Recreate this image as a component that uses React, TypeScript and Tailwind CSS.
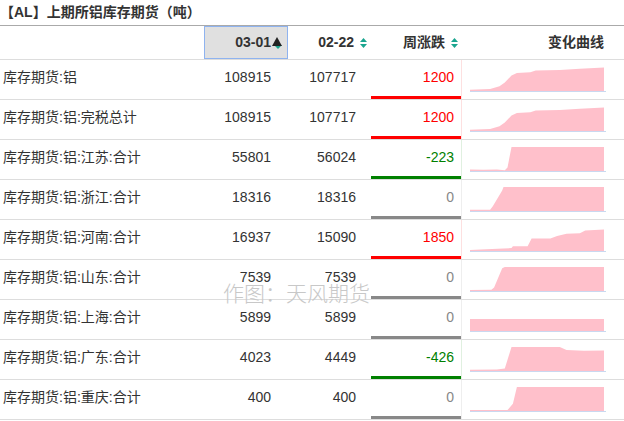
import React from "react"

type Row = {
  name: string
  a: string
  b: string
  chg: number
  pts: [number, number][]
}

const rows: Row[] = [
  {
    name: "库存期货:铝",
    a: "108915",
    b: "107717",
    chg: 1200,
    pts: [[0, 0.05], [0.15, 0.08], [0.22, 0.2], [0.26, 0.35], [0.31, 0.65], [0.35, 0.75], [0.45, 0.78], [0.49, 0.85], [0.67, 0.88], [0.82, 0.93], [1, 0.98]],
  },
  {
    name: "库存期货:铝:完税总计",
    a: "108915",
    b: "107717",
    chg: 1200,
    pts: [[0, 0.05], [0.15, 0.08], [0.22, 0.2], [0.26, 0.35], [0.31, 0.65], [0.35, 0.75], [0.45, 0.78], [0.49, 0.85], [0.67, 0.88], [0.82, 0.93], [1, 0.98]],
  },
  {
    name: "库存期货:铝:江苏:合计",
    a: "55801",
    b: "56024",
    chg: -223,
    pts: [[0, 0.06], [0.1, 0.05], [0.2, 0.06], [0.26, 0.03], [0.28, 0.15], [0.31, 1], [1, 1]],
  },
  {
    name: "库存期货:铝:浙江:合计",
    a: "18316",
    b: "18316",
    chg: 0,
    pts: [[0, 0.05], [0.15, 0.05], [0.17, 0.2], [0.24, 0.85], [0.25, 1], [1, 1]],
  },
  {
    name: "库存期货:铝:河南:合计",
    a: "16937",
    b: "15090",
    chg: 1850,
    pts: [[0, 0.04], [0.08, 0.06], [0.25, 0.1], [0.31, 0.12], [0.32, 0.2], [0.43, 0.2], [0.46, 0.52], [0.6, 0.52], [0.65, 0.62], [0.72, 0.72], [0.82, 0.74], [0.86, 0.86], [1, 0.9]],
  },
  {
    name: "库存期货:铝:山东:合计",
    a: "7539",
    b: "7539",
    chg: 0,
    pts: [[0, 0.04], [0.16, 0.05], [0.18, 0.15], [0.24, 0.95], [0.26, 1], [1, 1]],
  },
  {
    name: "库存期货:铝:上海:合计",
    a: "5899",
    b: "5899",
    chg: 0,
    pts: [[0, 0.5], [1, 0.5]],
  },
  {
    name: "库存期货:铝:广东:合计",
    a: "4023",
    b: "4449",
    chg: -426,
    pts: [[0, 0.05], [0.2, 0.06], [0.26, 0.1], [0.31, 1], [0.67, 1], [0.72, 0.87], [0.85, 0.84], [1, 0.85]],
  },
  {
    name: "库存期货:铝:重庆:合计",
    a: "400",
    b: "400",
    chg: 0,
    pts: [[0, 0.04], [0.28, 0.04], [0.32, 0.3], [0.35, 1], [1, 1]],
  },
]

function SortIcon() {
  return (
    <svg width="9" height="12" viewBox="0 0 9 12" className="shrink-0">
      <path d="M4.5 1 L8 5 L1 5 Z" fill="#1aa58f" />
      <path d="M4.5 11 L8 7 L1 7 Z" fill="#1aa58f" />
    </svg>
  )
}

function ActiveSortIcon() {
  return (
    <svg width="11" height="14" viewBox="0 0 11 14" className="shrink-0">
      <path d="M6 13 L10 9 L2 9 Z" fill="#1aa58f" />
      <path d="M5 1 L10 10 L0 10 Z" fill="#222" />
    </svg>
  )
}

function Spark({ pts }: { pts: [number, number][] }) {
  const w = 136
  const h = 26
  const top = 1
  const line = pts
    .map(([x, y]) => `${(x * (w - 2)).toFixed(1)},${(h - 1 - y * (h - 1 - top)).toFixed(1)}`)
    .join(" L")
  const d = `M0,${h - 1} L${line} L${w - 2},${h - 1} Z`
  return (
    <svg width={w} height={h + 1} viewBox={`0 0 ${w} ${h + 1}`}>
      <path d={d} fill="#ffc0cb" />
      <line x1="0" y1={h - 0.5} x2={w} y2={h - 0.5} stroke="#c9d8f0" strokeWidth="1" />
    </svg>
  )
}

export default function App() {
  const font = { fontFamily: '"Liberation Sans", Arial, "Noto Sans CJK SC", sans-serif' }
  return (
    <div className="relative w-[624px] h-[421px] bg-white text-[14px] text-[#333] overflow-hidden" style={font}>
      {/* 标题 */}
      <div className="h-[25px] pl-[0px] flex items-center font-bold text-[14px] text-[#333]">
        【AL】上期所铝库存期货（吨）
      </div>
      <div className="h-px bg-[#aaa]" />

      {/* 表头 */}
      <div className="grid grid-cols-[204px_84px_83px_91px_162px] h-[34px] border-b border-[#ddd] font-bold">
        <div />
        <div className="flex items-center justify-end gap-[1px] pr-[4px] bg-[#e0e0e0] border border-[#8fb3ef]">
          <span>03-01</span>
          <ActiveSortIcon />
        </div>
        <div className="flex items-center justify-end gap-[5px] pr-[3px]">
          <span>02-22</span>
          <SortIcon />
        </div>
        <div className="flex items-center justify-end gap-[5px] pr-[3px]">
          <span>周涨跌</span>
          <SortIcon />
        </div>
        <div className="flex items-center justify-end pr-[20px]">变化曲线</div>
      </div>

      {/* 数据行 */}
      {rows.map((r) => {
        const color = r.chg > 0 ? "text-[#ff0000]" : r.chg < 0 ? "text-[#008000]" : "text-[#888]"
        const bar = r.chg > 0 ? "bg-[#ff0000]" : r.chg < 0 ? "bg-[#008000]" : "bg-[#888]"
        const sep = r.chg > 0 ? "border-[#fde0e0]" : r.chg < 0 ? "border-[#e0f0e0]" : "border-[#eee]"
        return (
          <div key={r.name} className="grid grid-cols-[204px_84px_83px_91px_162px] h-[40px] border-b border-[#ddd]">
            <div className="flex items-center pl-[3px] pb-[4px]">{r.name}</div>
            <div className="flex items-center justify-end pr-[17px] pb-[4px]">{r.a}</div>
            <div className="flex items-center justify-end pr-[15px] pb-[4px]">{r.b}</div>
            <div className={`relative flex items-center justify-end pr-[7px] pb-[4px] border-r ${sep} ${color}`}>
              {r.chg}
              <div className={`absolute left-0 right-0 bottom-0 h-[3px] ${bar}`} />
            </div>
            <div className="flex items-start pl-[8px] pt-[6px]">
              <Spark pts={r.pts} />
            </div>
          </div>
        )
      })}

      {/* 水印 */}
      <div className="absolute left-[223px] top-[277px] text-[21px] text-[#c8c8c8] pointer-events-none" style={{ fontFamily: '"Noto Sans CJK SC", sans-serif', fontWeight: 300 }}>
        作图：天风期货
      </div>
    </div>
  )
}
